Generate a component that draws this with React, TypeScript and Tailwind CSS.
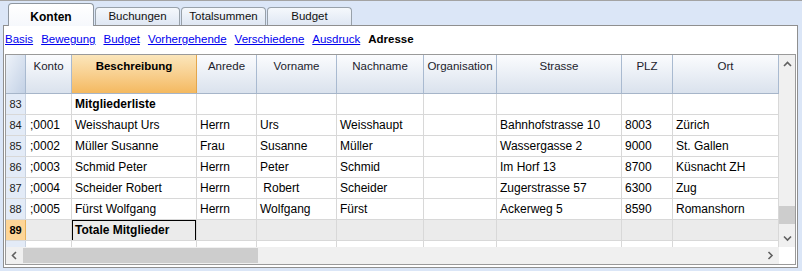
import { type ReactNode } from 'react'

const COLS = [
  { key: 'konto', label: 'Konto', w: 'w-[46px]' },
  { key: 'beschreibung', label: 'Beschreibung', w: 'w-[125px]' },
  { key: 'anrede', label: 'Anrede', w: 'w-[60px]' },
  { key: 'vorname', label: 'Vorname', w: 'w-[80px]' },
  { key: 'nachname', label: 'Nachname', w: 'w-[87px]' },
  { key: 'organisation', label: 'Organisation', w: 'w-[73px]' },
  { key: 'strasse', label: 'Strasse', w: 'w-[125px]' },
  { key: 'plz', label: 'PLZ', w: 'w-[51px]' },
  { key: 'ort', label: 'Ort', w: 'w-[106px]' },
] as const

type Row = { nr: number; cells: string[]; bold?: boolean; total?: boolean }

const ROWS: Row[] = [
  { nr: 83, cells: ['', 'Mitgliederliste', '', '', '', '', '', '', ''], bold: true },
  { nr: 84, cells: [';0001', 'Weisshaupt Urs', 'Herrn', 'Urs', 'Weisshaupt', '', 'Bahnhofstrasse 10', '8003', 'Zürich'] },
  { nr: 85, cells: [';0002', 'Müller Susanne', 'Frau', 'Susanne', 'Müller', '', 'Wassergasse 2', '9000', 'St. Gallen'] },
  { nr: 86, cells: [';0003', 'Schmid Peter', 'Herrn', 'Peter', 'Schmid', '', 'Im Horf 13', '8700', 'Küsnacht ZH'] },
  { nr: 87, cells: [';0004', 'Scheider Robert', 'Herrn', '\u00a0Robert', 'Scheider', '', 'Zugerstrasse 57', '6300', 'Zug'] },
  { nr: 88, cells: [';0005', 'Fürst Wolfgang', 'Herrn', 'Wolfgang', 'Fürst', '', 'Ackerweg 5', '8590', 'Romanshorn'] },
  { nr: 89, cells: ['', 'Totale Mitglieder', '', '', '', '', '', '', ''], total: true },
]

const LINKS = ['Basis', 'Bewegung', 'Budget', 'Vorhergehende', 'Verschiedene', 'Ausdruck']

function Chevron({ dir }: { dir: 'up' | 'down' | 'left' | 'right' }) {
  const pts = {
    up: '1,5 4.5,1.5 8,5',
    down: '1,1.5 4.5,5 8,1.5',
    left: '5,1 1.5,4.5 5,8',
    right: '1.5,1 5,4.5 1.5,8',
  }[dir]
  const horiz = dir === 'left' || dir === 'right'
  return (
    <svg width={horiz ? 7 : 9} height={horiz ? 9 : 7} viewBox={horiz ? '0 0 7 9' : '0 0 9 7'}>
      <polyline points={pts} fill="none" stroke="#606060" strokeWidth="1.6" />
    </svg>
  )
}

function Tab({ label, active, w }: { label: string; active?: boolean; w: string }) {
  if (active) {
    return (
      <div
        className={`relative z-10 -mb-px flex h-[23px] ${w} items-start justify-center rounded-t-[4px] border border-b-0 border-[#8e969f] bg-gradient-to-b from-white to-[#f6f8fc] pt-[4px] text-[12px] font-bold text-black`}
      >
        {label}
      </div>
    )
  }
  return (
    <div
      className={`flex h-[18px] ${w} items-center justify-center rounded-t-[4px] border border-b-0 border-[#98a1aa] bg-gradient-to-b from-[#f5f8fc] to-[#dfe7f3] pt-[1px] text-[11.5px] text-[#111]`}
    >
      {label}
    </div>
  )
}

function HeaderCell({ children, w, active }: { children: ReactNode; w: string; active?: boolean }) {
  return (
    <div
      className={`${w} shrink-0 border-r pt-[3px] text-center text-[11.5px] ${
        active
          ? 'border-[#e3a64c] bg-gradient-to-b from-[#fbe6bb] to-[#f4b95f] font-bold text-black'
          : 'border-[#a9bad0] bg-gradient-to-b from-[#fbfcfe] to-[#dae2ed] text-[#1c1c2c]'
      }`}
    >
      {children}
    </div>
  )
}

export default function App() {
  return (
    <div
      className="flex h-[271px] w-[802px] flex-col overflow-hidden border-t border-[#a3a3a3] bg-[#dbe6f7] pl-[3px]"
      style={{ fontFamily: '"Liberation Sans", Arial, sans-serif' }}
    >
      {/* tabs */}
      <div className="flex h-[24px] items-end gap-[1px] pl-[5px]">
        <Tab label="Konten" active w="w-[86px]" />
        <Tab label="Buchungen" w="w-[85px]" />
        <Tab label="Totalsummen" w="w-[85px]" />
        <Tab label="Budget" w="w-[85px]" />
      </div>

      {/* panel */}
      <div className="flex h-[243px] w-[795px] flex-col border border-[#8f8f8f] bg-white">
        <div className="flex h-[28px] items-center gap-[8px] pl-[1px] text-[11.5px]">
          {LINKS.map((l) => (
            <span key={l} className="text-[#0000ee] underline">
              {l}
            </span>
          ))}
          <span className="font-bold text-black">Adresse</span>
        </div>

        <div className="mx-[1px] flex h-[211px] flex-col border border-[#9a9a9a]">
          <div className="flex min-h-0 flex-1">
            {/* table */}
            <div className="flex w-[773px] flex-col">
              <div className="flex h-[39px] shrink-0 border-b border-[#a6b5c9]">
                <div className="w-[20px] shrink-0 border-r border-[#a9bad0] bg-gradient-to-br from-[#eef3fa] to-[#c3d1e5]" />
                {COLS.map((c) => (
                  <HeaderCell key={c.key} w={c.w} active={c.key === 'beschreibung'}>
                    {c.label}
                  </HeaderCell>
                ))}
              </div>

              {ROWS.map((r) => (
                <div
                  key={r.nr}
                  className={`flex h-[21px] shrink-0 border-b border-[#d8d8d8] text-[12px] ${
                    r.total ? 'bg-[#ebebeb]' : 'bg-white'
                  }`}
                >
                  <div
                    className={`flex w-[20px] shrink-0 items-center justify-center border-r text-[11px] ${
                      r.total
                        ? 'border-[#e8b25c] bg-[#fdd597] font-bold text-black'
                        : 'border-[#c9d3e1] bg-[#e3ebf7] text-[#222]'
                    }`}
                  >
                    {r.nr}
                  </div>
                  {COLS.map((c, i) => {
                    const cursor = r.total && c.key === 'beschreibung'
                    return (
                      <div
                        key={c.key}
                        className={`${c.w} flex shrink-0 items-center overflow-hidden whitespace-pre border-r border-[#d8d8d8] ${
                          i === 0 ? 'pl-[4px]' : 'pl-[3px]'
                        } ${r.bold || r.total ? 'font-bold' : ''} text-black`}
                      >
                        {cursor ? (
                          <div className="-ml-[3px] flex h-[21px] w-[124px] items-center border-[1.5px] border-black pl-[2px]">
                            {r.cells[i]}
                          </div>
                        ) : (
                          r.cells[i]
                        )}
                      </div>
                    )
                  })}
                </div>
              ))}

              <div className="flex min-h-0 flex-1">
                <div className="w-[20px] shrink-0 border-r border-[#c9d3e1] bg-[#e3ebf7]" />
                {COLS.map((c) => (
                  <div key={c.key} className={`${c.w} shrink-0 border-r border-[#d8d8d8]`} />
                ))}
              </div>
            </div>

            {/* vertical scrollbar */}
            <div className="flex w-[16px] flex-col bg-[#f0f0f0]">
              <div className="flex h-[17px] items-center justify-center pt-[2px]">
                <Chevron dir="up" />
              </div>
              <div className="flex-1" />
              <div className="h-[18px] bg-[#cdcdcd]" />
              <div className="h-[6px]" />
              <div className="flex h-[17px] items-center justify-center">
                <Chevron dir="down" />
              </div>
            </div>
          </div>

          {/* horizontal scrollbar */}
          <div className="flex h-[17px] shrink-0">
            <div className="flex w-[773px] bg-[#f0f0f0]">
              <div className="flex w-[17px] items-center justify-center">
                <Chevron dir="left" />
              </div>
              <div className="my-[1px] w-[235px] bg-[#cdcdcd]" />
              <div className="flex-1" />
              <div className="flex w-[17px] items-center justify-center">
                <Chevron dir="right" />
              </div>
            </div>
            <div className="w-[16px] bg-white" />
          </div>
        </div>
      </div>
    </div>
  )
}
